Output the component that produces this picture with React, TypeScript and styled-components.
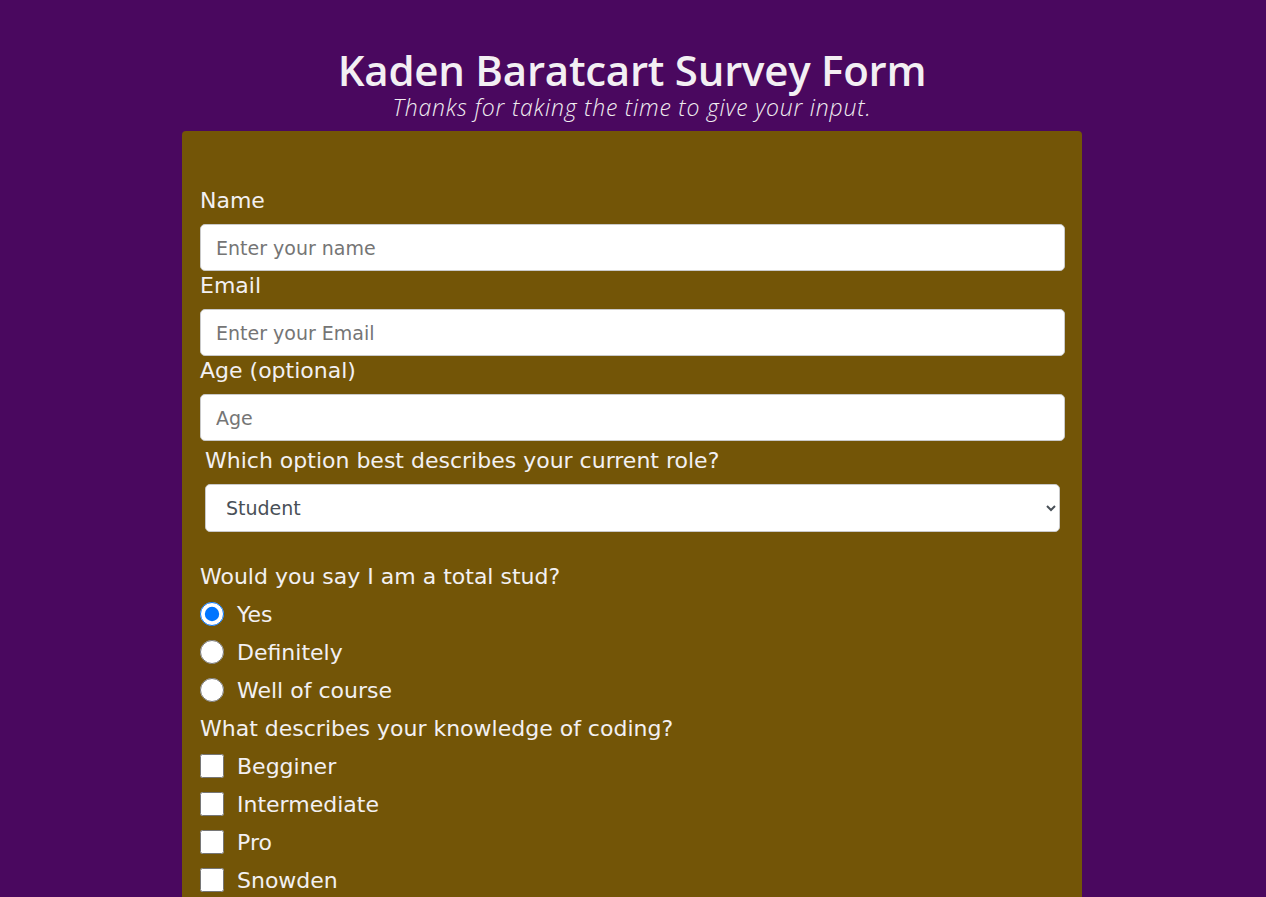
import React from "react";
import styled, { createGlobalStyle } from "styled-components";

const Global = createGlobalStyle`
  html, body { margin: 0; padding: 0; }
  body {
    background: #4a085f;
    font-family: "DejaVu Sans", "Noto Sans", sans-serif;
    color: #f2f0f2;
  }
  * { box-sizing: border-box; }
`;

const Page = styled.div`
  display: flex;
  flex-direction: column;
  align-items: center;
  padding-top: 48px;
  padding-right: 2px;
  min-height: 897px;
`;

const Header = styled.header`
  display: flex;
  flex-direction: column;
  align-items: center;
  margin-bottom: 13px;
`;

const Title = styled.h1`
  margin: 0;
  font-family: "Open Sans", sans-serif;
  font-size: 42px;
  line-height: 44px;
  font-weight: 600;
  letter-spacing: -0.25px;
  color: #f3eff3;
`;

const Subtitle = styled.p`
  margin: 4px 0 0;
  font-family: "Open Sans", sans-serif;
  font-size: 23px;
  line-height: 22px;
  font-style: italic;
  font-weight: 300;
  letter-spacing: 0.8px;
  color: #f0ecf0;
`;

const Form = styled.form`
  width: 900px;
  background: #735507;
  border-radius: 4px;
  padding: 55px 17px 40px 18px;
  display: flex;
  flex-direction: column;
`;

const Field = styled.div<{ $inset?: boolean }>`
  display: flex;
  flex-direction: column;
  margin: ${(p) => (p.$inset ? "5px 5px 0" : "0")};
`;

const Label = styled.label`
  font-size: 22px;
  line-height: 30px;
  margin-bottom: 8px;
  color: #f2f0f2;
`;

const TextInput = styled.input`
  height: 47px;
  width: 100%;
  border: 1px solid #c9c9c9;
  border-radius: 5px;
  padding: 0 15px;
  font-family: inherit;
  font-size: 19px;
  background: #fff;
  &::placeholder { color: #757575; }
`;

const Select = styled.select`
  height: 48px;
  width: 100%;
  border: 1px solid #c9c9c9;
  border-radius: 5px;
  padding: 0 16px;
  font-family: inherit;
  font-size: 19px;
  color: #495057;
  background: #fff;
`;

const Group = styled.div`
  display: flex;
  flex-direction: column;
  margin-top: 25px;
`;

const Question = styled.div`
  height: 38px;
  display: flex;
  align-items: center;
  font-size: 22px;
`;

const Option = styled.label`
  height: 38px;
  display: flex;
  align-items: center;
  gap: 13px;
  font-size: 22px;
`;

const Choice = styled.input`
  width: 24px;
  height: 24px;
  margin: 0;
`;

const radios = ["Yes", "Definitely", "Well of course"];
const checks = ["Begginer", "Intermediate", "Pro", "Snowden"];

export default function App() {
  return (
    <>
      <Global />
      <Page>
        <Header>
          <Title>Kaden Baratcart Survey Form</Title>
          <Subtitle>Thanks for taking the time to give your input.</Subtitle>
        </Header>
        <Form onSubmit={(e) => e.preventDefault()}>
          <Field>
            <Label htmlFor="name">Name</Label>
            <TextInput id="name" placeholder="Enter your name" />
          </Field>
          <Field>
            <Label htmlFor="email">Email</Label>
            <TextInput id="email" placeholder="Enter your Email" />
          </Field>
          <Field>
            <Label htmlFor="age">Age (optional)</Label>
            <TextInput id="age" placeholder="Age" />
          </Field>
          <Field $inset>
            <Label htmlFor="role">Which option best describes your current role?</Label>
            <Select id="role" defaultValue="Student">
              <option>Student</option>
              <option>Full Time Job</option>
              <option>Full Time Learner</option>
              <option>Other</option>
            </Select>
          </Field>
          <Group>
            <Question>Would you say I am a total stud?</Question>
            {radios.map((r, i) => (
              <Option key={r}>
                <Choice type="radio" name="stud" defaultChecked={i === 0} />
                {r}
              </Option>
            ))}
            <Question>What describes your knowledge of coding?</Question>
            {checks.map((c) => (
              <Option key={c}>
                <Choice type="checkbox" />
                {c}
              </Option>
            ))}
          </Group>
        </Form>
      </Page>
    </>
  );
}
